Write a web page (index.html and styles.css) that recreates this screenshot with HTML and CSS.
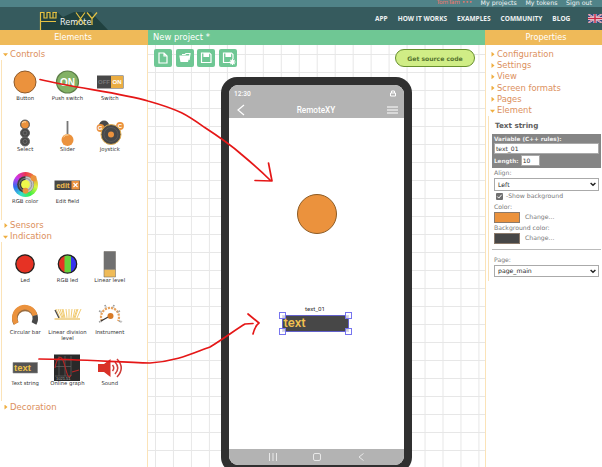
FILE: index.html
```html
<!DOCTYPE html>
<html lang="en">
<head>
<meta charset="utf-8">
<title>RemoteXY editor</title>
<link rel="stylesheet" href="styles.css">
</head>
<body>
<div class="account"><span class="user">TomTam •••</span><span>My projects</span><span>My tokens</span><span>Sign out</span></div>
<header class="nav">
  <div class="logo">
    <svg class="logo-art" width="70" height="23" viewBox="0 0 70 23"><path d="M1 23V5H18L24 10 35 5H52L69 23Z" fill="#20413f"/></svg>
    <span class="logo-text">Remote</span>
    <svg class="logo-lines" width="70" height="23" viewBox="0 0 70 23"><path d="M1.500 23V5.500H5V11H8V5.500H11V11H14V5.500H18M14 11H17V5.500M1.500 14.500H17M37 5.500 46 18M46 5.500 37 18M48 5.500 53 11.500 58 5.500M53 11.500V18" fill="none" stroke="#e5c243" stroke-width="1.200"/></svg>
  </div>
  <nav class="links"><a>APP</a><a>HOW IT WORKS</a><a>EXAMPLES</a><a>COMMUNITY</a><a>BLOG</a></nav>
  <svg class="flag" width="14" height="9" viewBox="0 0 14 9"><path d="M0 0H14V9H0Z" fill="#35457f"/><path d="M0 0 14 9M14 0 0 9" stroke="#e4dce4" stroke-width="1.800"/><path d="M0 0 14 9M14 0 0 9" stroke="#c43c55" stroke-width=".6"/><path d="M7 0V9M0 4.500H14" stroke="#f0e8ee" stroke-width="3"/><path d="M7 0V9M0 4.500H14" stroke="#c82844" stroke-width="1.500"/></svg>
</header>
<main class="editor">
  <aside class="elements">
    <h2 class="bar">Elements</h2>
    <h3 class="section open">Controls</h3>
    <div class="palette">
      <div class="item"><svg viewBox="0 0 30 30"><circle cx="15" cy="15" r="11" fill="#eb923d" stroke="#8d5a2b"/></svg><span>Button</span></div>
      <div class="item"><svg viewBox="0 0 30 30"><circle cx="15.500" cy="15" r="11" fill="#83b265" stroke="#5d7f49" stroke-width="1.200"/><text class="on" x="15.500" y="18.700">ON</text></svg><span>Push switch</span></div>
      <div class="item"><svg viewBox="0 0 30 30"><path d="M2 8.500H28.500V21.500H2Z" fill="#484848"/><path d="M16 9H28V21H16Z" fill="#ebad42"/><text class="tiny off" x="9" y="17.300">OFF</text><text class="tiny" x="22" y="17.300">ON</text></svg><span>Switch</span></div>
      <div class="item"><svg viewBox="0 0 30 30"><g fill="#484848" stroke="#666"><circle cx="15" cy="6.500" r="4.500"/><circle cx="15" cy="15" r="4.500"/><circle cx="15" cy="23.500" r="4.500"/></g><circle cx="15" cy="6.500" r="3.800" fill="#eb923d"/><g fill="none" stroke="#777" stroke-width=".7"><circle cx="15" cy="15" r="2"/><circle cx="15" cy="23.500" r="2"/></g><path d="M12 5Q14 3 16 4" stroke="#ffe1ae" fill="none"/></svg><span>Select</span></div>
      <div class="item"><svg viewBox="0 0 30 30"><path d="M15.500 3V18" stroke="#777" stroke-width="1.800"/><circle cx="15.500" cy="22" r="6" fill="#eb923d"/><path d="M11.500 19Q13.500 16 16.500 17" stroke="#ffe1ae" fill="none"/></svg><span>Slider</span></div>
      <div class="item"><svg viewBox="0 0 30 30"><circle cx="9" cy="7.500" r="5" fill="#484848"/><circle cx="5.500" cy="10" r="3.900" fill="#eb923d"/><circle cx="25" cy="8" r="3.900" fill="#eb923d"/><text class="tiny" x="5" y="12">G</text><text class="tiny" x="25" y="10">C</text><circle cx="16" cy="16.500" r="10" fill="#484848" stroke="#dfad53"/><circle cx="16" cy="16.500" r="7" fill="none" stroke="#606060" stroke-width=".7"/><circle cx="16" cy="16.500" r="3" fill="#eb923d"/></svg><span>Joystick</span></div>
      <div class="item"><div class="wheel"><svg viewBox="0 0 26 26"><circle cx="13" cy="13" r="8.700" fill="#3d3d3d"/><path d="M13 4.300A8.700 8.700 0 0 1 13 21.700Z" fill="#c4c4c4"/><circle cx="13" cy="13" r="6.500" fill="none" stroke="#888" stroke-width=".8"/><circle cx="13" cy="13" r="4.600" fill="#eef94b"/><circle cx="21.500" cy="6.500" r="3" fill="#eb923d"/><circle cx="13" cy="19.500" r="3" fill="#eb923d"/></svg></div><span>RGB color</span></div>
      <div class="item"><svg viewBox="0 0 30 30"><path d="M2.500 10.500H28V20H2.500Z" fill="#484848"/><path d="M19.500 11H27.500V19.500H19.500Z" fill="#eb923d"/><text class="edit" x="10.800" y="17.600">edit</text><path d="m21.500 13 4 4m0-4-4 4" stroke="#fff" stroke-width="1.100"/></svg><span>Edit field</span></div>
    </div>
    <h3 class="section">Sensors</h3>
    <h3 class="section open">Indication</h3>
    <div class="palette indication">
      <div class="item"><svg viewBox="0 0 30 30"><circle cx="15" cy="15" r="9.200" fill="#e63224" stroke="#24221f" stroke-width="1.300"/></svg><span>Led</span></div>
      <div class="item"><svg viewBox="0 0 30 30"><circle cx="15.500" cy="15" r="9" fill="#66d13b"/><path d="M12.500 6.500A9 9 0 0 0 12.500 23.500Z" fill="#e63224"/><path d="M19 6.500A9 9 0 0 1 19 23.500Z" fill="#3532ee"/><circle cx="15.500" cy="15" r="9.200" fill="none" stroke="#24221f" stroke-width="1.300"/></svg><span>RGB led</span></div>
      <div class="item"><svg viewBox="0 0 30 30"><path d="M9 2.500H20.500V20.500H9Z" fill="#707070"/><path d="M9 20.500H20.500V28H9Z" fill="#efbb58"/><path d="M9 2.500H20.500V28H9ZM9 20.500H20.500" fill="none" stroke="#77726b" stroke-width=".6"/></svg><span>Linear level</span></div>
      <div class="item"><svg viewBox="0 0 30 30"><path d="M6 22.500A10.300 10.300 0 1 1 24.900 14.500" fill="none" stroke="#9a6d40" stroke-width="5.600"/><path d="M6.300 22.300A10.300 10.300 0 1 1 24.900 14.500" fill="none" stroke="#eb923d" stroke-width="4.800"/><path d="M24.900 14.500A10.300 10.300 0 0 1 24 22.500" fill="none" stroke="#484848" stroke-width="5.400"/></svg><span>Circular bar</span></div>
      <div class="item"><svg viewBox="0 0 30 30"><path d="m4 8 4 9m0-9 3 9m0-9 2 9m1-9 1 9m2-9v9m3-9-1 9m4-9-2 9m5-9-3 9m6-9-4 9M6 8l4 9m0-9 2 9m13-9-3 9" stroke="#efc665" stroke-width=".9"/><path d="m3 9 4 8" stroke="#484848" stroke-width="1.200"/><path d="M2.500 18H28" stroke="#e7bb51" stroke-width="1.200"/></svg><span>Linear division level</span></div>
      <div class="item"><svg viewBox="0 0 30 30"><path d="M7 20A9 9 0 1 1 23 20" fill="none" stroke="#e7a35f" stroke-width="2.200" stroke-dasharray="2.200 1"/><path d="m4 21 3-1M4 10l3 1M10 4l1 3m8-3-1 3m7 3-3 1m2 9 3 1" stroke="#999" stroke-width="1.800" stroke-dasharray="1 .5"/><path d="m6 20 9-5" stroke="#333" stroke-width="1.300"/><circle cx="15.500" cy="15" r="3" fill="#d87b27"/></svg><span>Instrument</span></div>
      <div class="item"><svg viewBox="0 0 30 30"><path d="M3 10.500H27.500V21H3Z" fill="#555" stroke="#858585" stroke-width=".6"/><text class="text-icon" x="4" y="18.700">text</text></svg><span>Text string</span></div>
      <div class="item"><svg viewBox="0 0 30 30"><path d="M2 2.500H28V29H2Z" fill="#292929"/><path d="M7 4V24M13 4V24M19 4V24M3 8H19M3 14.500H19M3 24H19" stroke="#666" stroke-width=".7"/><path d="M3 16C5 5 9 1 12 11S16 29 19 23M20 20l7-2" fill="none" stroke="#b52525" stroke-width="1.100"/><text class="graph-text" x="4" y="28">1021.51</text></svg><span>Online graph</span></div>
      <div class="item"><svg viewBox="0 0 30 30"><path d="M3 12H9L15.500 7V25L9 20H3Z" fill="#d93128"/><path d="M17.500 13Q20 16 17.500 19M20 10Q25.500 16 20 22M22 7Q30.500 16 22 25" fill="none" stroke="#ce3d38" stroke-width="1.500"/></svg><span>Sound</span></div>
    </div>
    <h3 class="section">Decoration</h3>
  </aside>
  <section class="project">
    <h2 class="bar project-title">New project *</h2>
    <div class="canvas">
      <div class="toolbar">
        <button><svg viewBox="0 0 18 18"><path d="M5 4H10L13 7V14H5ZM10 4V7H13"/></svg></button>
        <button><svg viewBox="0 0 18 18"><path class="solid" d="M4 7H13L11.500 12.500H5Z"/><path d="M6 5.500H9L10 4.500H14L13 11"/></svg></button>
        <button><svg viewBox="0 0 18 18"><path d="M4.500 4H12.500L14 5.500V13.500H4.500Z"/><path class="solid" d="M7 4.500H11.500V7.500H7Z"/></svg></button>
        <button><svg viewBox="0 0 18 18"><path d="M12 13.500H4.500V4H12.500L14 5.500V10M10.500 13H16.500M13.500 10V16M11.400 10.900 15.600 15.100M15.600 10.900 11.400 15.100"/><path class="solid" d="M7 4.500H11.500V7.500H7Z"/></svg></button>
        <button class="source">Get source code</button>
      </div>
      <div class="phone"><div class="screen">
        <div class="status"><span>12:30</span><svg width="6" height="7" viewBox="0 0 6 7"><path d="M.5 3H5.500V6H.5Z" fill="none" stroke="#fff"/><path d="M1.500 3V1H4.500V3" fill="none" stroke="#fff"/></svg></div>
        <div class="appbar"><svg width="8" height="12" viewBox="0 0 8 12"><path d="M7 1 1 6 7 11"/></svg><span>RemoteXY</span><svg width="11" height="8" viewBox="0 0 11 8"><path d="M0 1H11M0 4H11M0 7H11"/></svg></div>
        <div class="page"><div class="round"></div><div class="label">text_01</div><div class="field">text<i></i><i></i><i></i><i></i></div></div>
        <div class="softkeys"><svg width="8" height="8" viewBox="0 0 8 8"><path d="M.5 0V8M4 0V8M7.500 0V8"/></svg><svg width="8" height="8" viewBox="0 0 8 8"><rect x=".5" y=".5" width="7" height="7" rx="1.500"/></svg><svg width="8" height="8" viewBox="0 0 8 8"><path d="M6.500 .5 2 4 6.500 7.500"/></svg></div>
      </div></div>
    </div>
  </section>
  <aside class="properties">
    <h2 class="bar">Properties</h2>
    <h3 class="section">Configuration</h3>
    <h3 class="section">Settings</h3>
    <h3 class="section">View</h3>
    <h3 class="section">Screen formats</h3>
    <h3 class="section">Pages</h3>
    <h3 class="section open">Element</h3>
    <div class="form">
      <h4>Text string</h4>
      <div class="variable"><b>Variable (C++ rules):</b><div class="input">text_01</div><div class="length"><b>Length:</b><div class="input">10</div></div></div>
      <div class="fields">
        <div>Align:</div>
        <div class="select">Left<svg viewBox="0 0 5 4"><path d="m.5.7 2 2 2-2"/></svg></div>
        <div class="check"><svg width="7" height="7" viewBox="0 0 7 7"><rect width="7" height="7" rx="1" fill="#6f6f6f"/><path d="m1.300 3.500 1.500 1.600L5.700 1.700" fill="none" stroke="#fff"/></svg>-Show background</div>
        <div>Color:</div>
        <div class="color"><span class="swatch"></span>Change...</div>
        <div>Background color:</div>
        <div class="color"><span class="swatch dark"></span>Change...</div>
        <hr>
        <div>Page:</div>
        <div class="select">page_main<svg viewBox="0 0 5 4"><path d="m.5.7 2 2 2-2"/></svg></div>
      </div>
    </div>
  </aside>
</main>
<svg class="arrows" width="602" height="467" viewBox="0 0 602 467"><path d="M40 79.500C75 88 122 93 148 101C180 110 187 115 204 127C224 140 232 146 241 154C253 164 262 172 270 180M255 180.500 272 181 268.500 163M39 359C75 359 116 362 150 363C178 361 193 353 210 347C223 339 238 328 245 324L253 323.500M248 314 259 323Q255 326 253 334"/></svg>
</body>
</html>
```

FILE: styles.css
```css
* { box-sizing: border-box; }
body { margin: 0; width: 602px; height: 467px; overflow: hidden; background: #fff; font-family: "DejaVu Sans", sans-serif; display: flex; flex-direction: column; position: relative; }
.account { height: 7px; flex: none; background: #508388; color: #f0f4f4; font: 6.3px/7px "DejaVu Sans"; display: flex; justify-content: flex-end; gap: 8.500px; padding-right: 10px; }
.account span { margin-top: -1.500px; white-space: nowrap; }
.account .user { color: #ed7669; font-size: 5.8px; }
.nav { height: 23px; flex: none; background: #365b5e; display: flex; align-items: center; padding-left: 39px; }
.logo { width: 70px; height: 23px; position: relative; }
.logo-art { display: block; }
.logo-lines { position: absolute; left: 0; top: 0; }
.logo-text { position: absolute; left: 21px; top: 10px; color: #eef1f1; font-size: 8.200px; line-height: 10px; }
.links { display: flex; gap: 10px; margin-left: 266px; color: #eef2f2; font: bold 6.500px/10px "Open Sans", sans-serif; white-space: nowrap; }
.flag { margin-left: auto; }
.editor { display: flex; flex: 1; min-height: 0; }
.elements { width: 148px; border-right: 1.500px solid #fbe3b8; flex: none; }
.project { width: 337px; flex: none; display: flex; flex-direction: column; }
.properties { flex: 1; min-width: 0; border-left: 1.500px solid #fbe3b8; }
.bar { margin: 0; height: 15px; font-size: 8.1px; line-height: 15px; font-weight: normal; text-align: center; background: #efba59; color: #fff; }
.elements .bar { margin-right: -1px; padding-right: 2px; }
.properties .bar { margin-left: -1px; padding-left: 5px; }
.project .project-title { background: #6fc794; text-align: left; padding-left: 5px; font-size: 8.400px; }
.section { margin: 0; height: 11.300px; display: flex; align-items: center; gap: 2px; padding-left: 3px; font-size: 8.5px; line-height: 11px; font-weight: normal; color: #dc905d; white-space: nowrap; }
.section::before { content: ""; width: 5px; height: 5px; background: #efae40; clip-path: polygon(30% 0, 90% 50%, 30% 100%); }
.section.open::before { clip-path: polygon(0 30%, 100% 30%, 50% 90%); }
.bar + .section { margin-top: 3.500px; }
.palette { height: 160px; margin-left: 1px; border-left: 1.500px solid #fbe3b8; padding: 7px 0 0 2px; display: grid; grid-template-columns: repeat(3, 42.300px); grid-auto-rows: 51.600px; }
.palette.indication { height: 159px; grid-auto-rows: 51.200px; }
.item { display: flex; flex-direction: column; align-items: center; font-size: 5.3px; line-height: 6.300px; text-align: center; color: #333; }
.item > svg { width: 30px; height: 30px; flex: none; }
.item span { margin-top: -2px; }
.on { font: bold 10px "Liberation Sans"; fill: #fff; text-anchor: middle; }
.tiny { font: bold 6px "Liberation Sans"; fill: #fff; text-anchor: middle; }
.off { fill: #777; }
.edit { font: bold 7.500px "Liberation Sans"; fill: #f1bd4e; text-anchor: middle; }
.text-icon { font: bold 9.500px "Liberation Sans"; fill: #efc149; }
.graph-text { font: 4px "Liberation Sans"; fill: #aaa; }
.wheel { width: 25px; height: 25px; margin: 2.500px 0; border-radius: 50%; background: conic-gradient(#ed3550, #eb8f39, #d9f53e, #3bef45, #35dfd0, #326cf0, #ce35ea, #ed3550); }
.wheel svg { display: block; width: 25px; height: 25px; }
.canvas { flex: 1; min-height: 0; position: relative; background-image: linear-gradient(90deg, #e7e7e7 1px, transparent 1px), linear-gradient(#e7e7e7 1px, transparent 1px); background-size: 17.970px 18px; background-position: 7px 9px; padding-top: 4px; overflow: hidden; }
.toolbar { display: flex; gap: 3.500px; padding-left: 6px; height: 18px; }
.toolbar button { width: 18px; height: 18px; padding: 0; border: 0; border-radius: 2px; background: #6fc794; flex: none; }
.toolbar svg { display: block; fill: none; stroke: #fff; stroke-width: 1.200; }
.toolbar .solid { fill: #fff; }
.toolbar .source { width: 80px; margin-left: 155px; border: 1.500px solid #67902d; border-radius: 9px; background: #d0ed86; color: #55742f; font: bold 6.1px "DejaVu Sans"; white-space: nowrap; }
.phone { margin: 10px 0 0 73px; width: 191px; height: 396px; border-radius: 16px; background: #303030; padding: 8px; }
.screen { height: 380px; border-radius: 9px; background: #fff; overflow: hidden; display: flex; flex-direction: column; font-family: Roboto, sans-serif; }
.status { height: 16px; background: #b3b3b3; color: #fff; font-size: 6.6px; font-weight: 500; display: flex; align-items: center; justify-content: space-between; padding: 1px 8px 0 5px; }
.appbar { height: 17px; background: #b3b3b3; color: #fff; font-size: 8.2px; font-weight: 500; display: flex; align-items: center; justify-content: space-between; padding: 0 6px 0 8px; }
.appbar svg, .softkeys svg { fill: none; stroke: #fff; stroke-width: 1.200; }
.page { flex: 1; display: flex; flex-direction: column; align-items: center; padding-top: 76px; }
.round { width: 40px; height: 40px; border: 1.500px solid #8d5b24; border-radius: 50%; background: #eb923d; flex: none; }
.label { font-size: 6.2px; line-height: 8px; margin-top: 71px; margin-right: 3px; color: #333; }
.field { width: 67px; height: 17px; margin-top: 2px; margin-right: 3px; border: 1px solid #6260cb; background: #474747; color: #f2c150; font-size: 13px; font-weight: 500; line-height: 14px; padding-left: 1px; position: relative; }
.field i { position: absolute; width: 7px; height: 7px; border: 1px solid #7775ef; background: rgba(255,255,255,.75); }
.field i:nth-of-type(1) { left: -4px; top: -4px; }
.field i:nth-of-type(2) { right: -4px; top: -4px; }
.field i:nth-of-type(3) { left: -4px; bottom: -4px; }
.field i:nth-of-type(4) { right: -4px; bottom: -4px; }
.softkeys { height: 16px; background: #b3b3b3; display: flex; align-items: center; justify-content: center; gap: 36px; }
.softkeys svg { stroke: #e8e8e8; stroke-width: 1; }
.form { margin-left: 2px; height: 165px; border-left: 1.500px solid #fbe3b8; padding: 5px 1px 0 3px; color: #777; font-size: 6.15px; line-height: 8px; white-space: nowrap; }
.properties .section { padding-left: 4px; font-size: 8.4px; }
.form h4 { margin: 0 0 4px 3px; font-size: 7.2px; line-height: 9px; color: #606060; }
.variable { height: 34px; background: #858585; color: #f2f2f2; padding: 1px 2px; font-size: 5.7px; }
.variable b { display: block; line-height: 8px; }
.input { height: 11px; background: #fff; border: 1px solid #aaa; color: #333; padding-left: 1px; line-height: 9px; font-size: 6px; }
.length { display: flex; gap: 2px; align-items: center; margin-top: 1px; }
.length .input { width: 19px; }
.fields { padding: 1px 2px; }
.select { height: 12.500px; border: 1px solid #aaa; display: flex; align-items: center; justify-content: space-between; padding: 0 2px 0 3px; margin-top: 1px; color: #222; }
.select svg { width: 6px; height: 5px; fill: none; stroke: #222; stroke-width: 1.200; }
.check { display: flex; align-items: center; gap: 3px; height: 11px; padding-left: 2px; margin-bottom: 1px; }
.color { display: flex; align-items: center; gap: 5px; height: 11px; margin: 1px 0; }
.swatch { width: 26px; height: 11px; border: 1px solid #8b7a6b; background: #eb923d; }
.swatch.dark { background: #474747; }
.fields hr { border: 0; height: 1px; background: #bbb; margin: 5px -2px 6px; }
.arrows { position: absolute; left: 0; top: 0; fill: none; stroke: #e51717; stroke-width: 1.700; stroke-linecap: round; stroke-linejoin: round; pointer-events: none; }
```
